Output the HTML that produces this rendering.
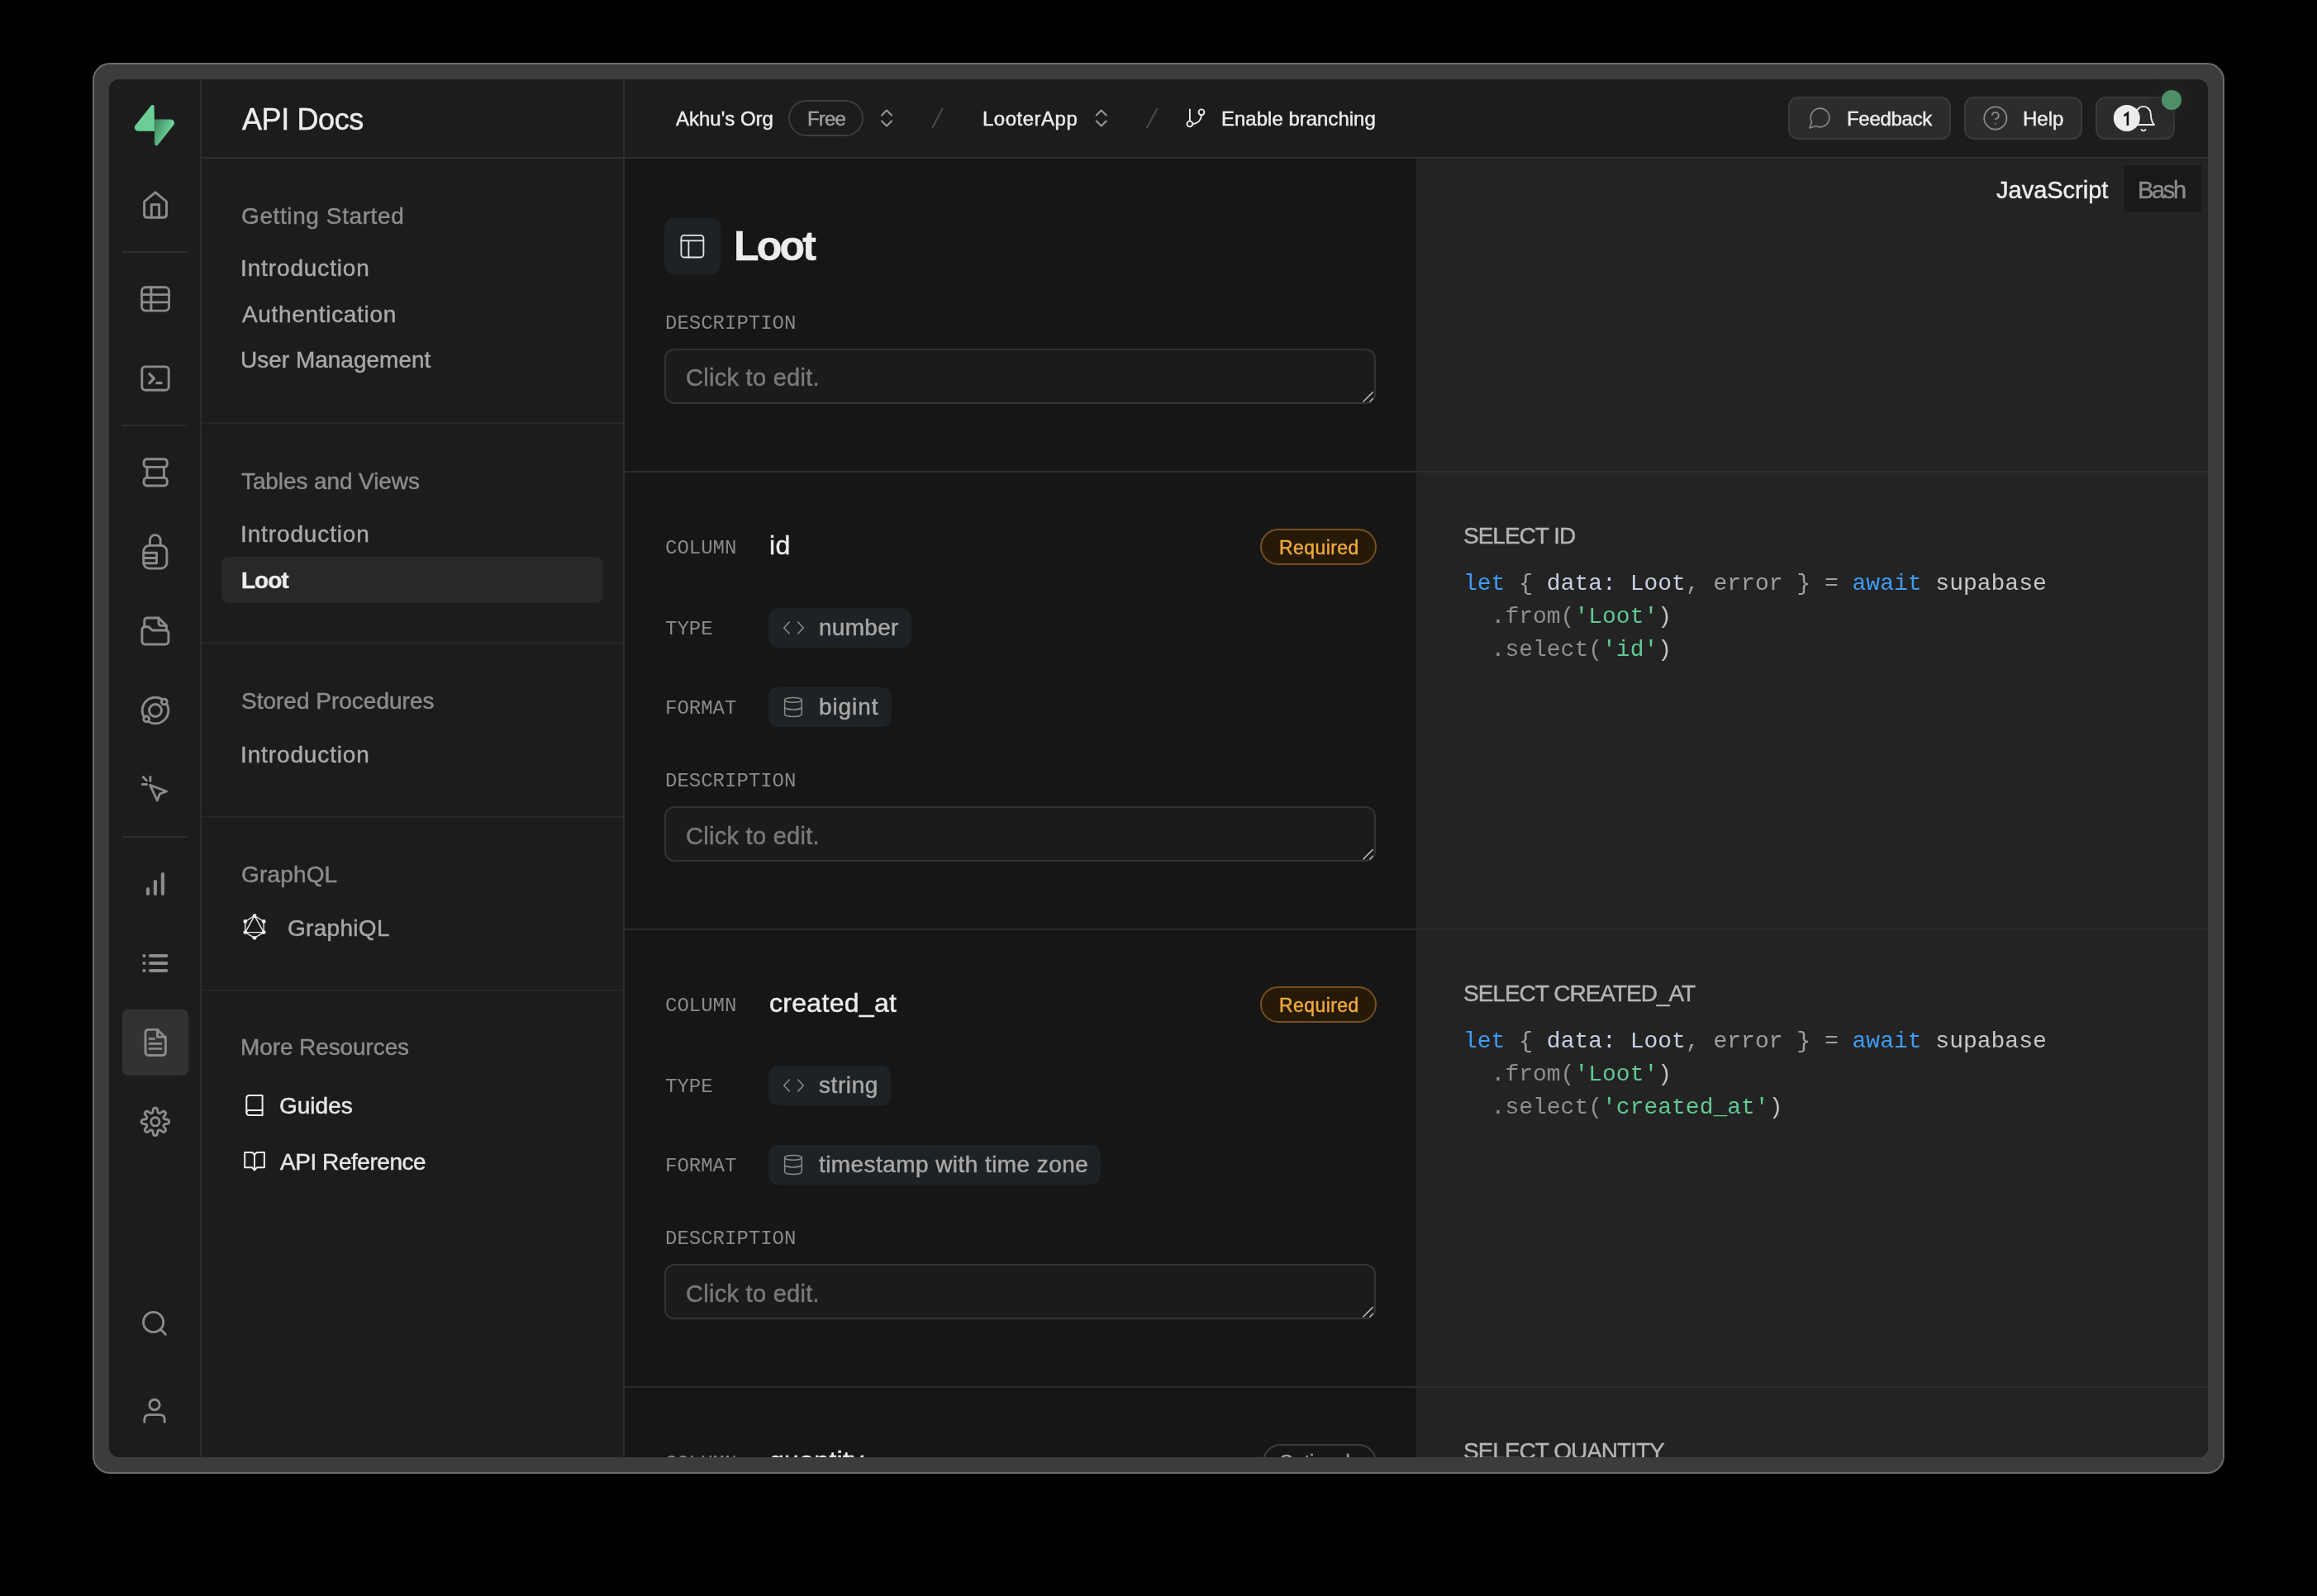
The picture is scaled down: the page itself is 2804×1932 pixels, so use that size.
<!DOCTYPE html>
<html><head><meta charset="utf-8">
<style>
html,body{margin:0;padding:0;width:2804px;height:1932px;background:#000;overflow:hidden}
*{box-sizing:border-box}
.frame{position:absolute;left:112px;top:76px;width:2580px;height:1708px;border-radius:21px;background:#3c3c3c;border:2px solid #6b6b6b}
.app{position:absolute;left:132px;top:96px;width:2540px;height:1668px;border-radius:12px;overflow:hidden;background:#1c1c1c}
.w{position:absolute;left:-132px;top:-96px;width:2804px;height:1932px;will-change:transform}
.r{position:absolute}
.t{position:absolute;white-space:nowrap;line-height:1;font-family:"Liberation Sans",sans-serif;-webkit-text-stroke:0.45px currentColor}
.m{position:absolute;white-space:pre;line-height:1;font-family:"Liberation Mono",monospace}
.hl{position:absolute;height:2px;background:#2c2c2c}
.vl{position:absolute;width:2px;background:#2c2c2c}
.sh{font-size:28px;color:#8c8c8c}
.si{font-size:28px;color:#a9a9a9}
.lbl{font-size:24px;color:#8a8a8a}
.pill{position:absolute;height:48px;border-radius:12px;background:#1f2224}
.ta{position:absolute;left:804px;width:861px;height:67px;border-radius:12px;background:#1b1b1b;border:2px solid #333}
.cte{font-size:29px;color:#7a7a7a}
.code{font-size:28px;color:#a0a0a0}
</style></head><body>
<div class="frame"></div>
<div class="app"><div class="w">
<!-- panels -->
<div class="r" style="left:756px;top:192px;width:958px;height:1572px;background:#161616"></div>
<div class="r" style="left:1714px;top:192px;width:958px;height:1572px;background:#232323"></div>
<!-- borders -->
<div class="vl" style="left:242px;top:96px;height:1668px"></div>
<div class="vl" style="left:754px;top:96px;height:1668px"></div>
<div class="hl" style="left:244px;top:190px;width:2428px;background:#2f2f2f"></div>
<!-- icon sidebar dividers -->
<div class="hl" style="left:148px;top:304px;width:78px"></div>
<div class="hl" style="left:148px;top:514px;width:78px"></div>
<div class="hl" style="left:148px;top:1012px;width:78px"></div>
<!-- sidebar dividers -->
<div class="hl" style="left:244px;top:511px;width:510px;background:#262626"></div>
<div class="hl" style="left:244px;top:777px;width:510px;background:#262626"></div>
<div class="hl" style="left:244px;top:988px;width:510px;background:#262626"></div>
<div class="hl" style="left:244px;top:1198px;width:510px;background:#262626"></div>
<!-- content dividers -->
<div class="hl" style="left:756px;top:570px;width:1916px"></div>
<div class="hl" style="left:756px;top:1124px;width:1916px"></div>
<div class="hl" style="left:756px;top:1678px;width:1916px"></div>

<div class="r" style="left:148px;top:1222px;width:80px;height:80px;border-radius:7px;background:#323232"></div>
<!-- SIDEBAR TEXT -->
<div class="t" style="left:293px;top:127px;font-size:36px;color:#ededed;letter-spacing:-0.4px">API Docs</div>
<div class="t sh" style="left:292px;top:248px;letter-spacing:0.6px">Getting Started</div>
<div class="t si" style="left:291px;top:311px;letter-spacing:0.87px">Introduction</div>
<div class="t si" style="left:293px;top:367px;letter-spacing:0.68px">Authentication</div>
<div class="t si" style="left:291px;top:422px">User Management</div>
<div class="t sh" style="left:292px;top:569px;letter-spacing:-0.1px">Tables and Views</div>
<div class="t si" style="left:291px;top:633px;letter-spacing:0.87px">Introduction</div>
<div class="r" style="left:268px;top:674px;width:462px;height:56px;border-radius:9px;background:#282828"></div>
<div class="t" style="left:292px;top:689px;font-size:28px;font-weight:700;color:#ededed;letter-spacing:-1px">Loot</div>
<div class="t sh" style="left:292px;top:835px">Stored Procedures</div>
<div class="t si" style="left:291px;top:900px;letter-spacing:0.87px">Introduction</div>
<div class="t sh" style="left:292px;top:1045px;letter-spacing:0.17px">GraphQL</div>
<div class="t si" style="left:348px;top:1110px;letter-spacing:0.3px">GraphiQL</div>
<div class="t sh" style="left:291px;top:1254px;letter-spacing:-0.1px">More Resources</div>
<div class="t si" style="left:338px;top:1325px;color:#e6e6e6">Guides</div>
<div class="t si" style="left:339px;top:1393px;color:#e6e6e6;letter-spacing:-0.45px">API Reference</div>
<!--SIDEBAR_END-->
<!-- HEADER -->
<div class="t" style="left:818px;top:132px;font-size:24px;color:#ececec">Akhu's Org</div>
<div class="r" style="left:954px;top:121px;width:91px;height:44px;border-radius:22px;border:2px solid #3d3d3d"></div>
<div class="t" style="left:977px;top:132px;font-size:24px;color:#a0a0a0;letter-spacing:-0.8px">Free</div>
<div class="t" style="left:1189px;top:132px;font-size:24px;color:#ececec;letter-spacing:0.5px">LooterApp</div>
<div class="t" style="left:1478px;top:132px;font-size:24px;color:#ececec">Enable branching</div>
<div class="r" style="left:2164px;top:117px;width:197px;height:52px;border-radius:12px;background:#2c2c2c;border:2px solid #3a3a3a"></div>
<div class="t" style="left:2235px;top:132px;font-size:24px;color:#ececec;letter-spacing:-0.3px">Feedback</div>
<div class="r" style="left:2377px;top:117px;width:143px;height:52px;border-radius:12px;background:#2c2c2c;border:2px solid #3a3a3a"></div>
<div class="t" style="left:2448px;top:132px;font-size:24px;color:#ececec">Help</div>
<div class="r" style="left:2536px;top:117px;width:96px;height:52px;border-radius:12px;background:#2c2c2c;border:2px solid #3a3a3a"></div>
<div class="r" style="left:2596px;top:89px;width:64px;height:64px;border-radius:32px;background:radial-gradient(circle,rgba(40,50,44,.55) 0,rgba(30,34,32,.4) 45%,rgba(28,28,28,0) 70%)"></div>
<div class="r" style="left:2616px;top:109px;width:24px;height:24px;border-radius:12px;background:#4e8f68"></div>

<!-- CODE PANEL TABS -->
<div class="t" style="left:2416px;top:216px;font-size:29px;color:#ededed">JavaScript</div>
<div class="r" style="left:2570px;top:200px;width:94px;height:56px;background:#191919"></div>
<div class="t" style="left:2587px;top:216px;font-size:29px;color:#8a8a8a;letter-spacing:-2.3px">Bash</div>

<!-- TITLE -->
<div class="r" style="left:804px;top:264px;width:68px;height:68px;border-radius:12px;background:#1f2224"></div>
<div class="t" style="left:888px;top:273px;font-size:50px;font-weight:700;color:#ededed;letter-spacing:-2.8px">Loot</div>
<div class="m lbl" style="left:805px;top:380px">DESCRIPTION</div>
<div class="ta" style="top:422px"></div>
<div class="t cte" style="left:830px;top:443px;letter-spacing:0.28px">Click to edit.</div>
<!-- section 0 -->
<div class="m lbl" style="left:805px;top:652px">COLUMN</div>
<div class="t" style="left:931px;top:644px;font-size:32px;color:#ededed;letter-spacing:0.3px">id</div>
<div class="r" style="left:1525px;top:640px;width:141px;height:44px;border-radius:22px;background:#261a07;border:2px solid #75501f"></div>
<div class="t" style="left:1548px;top:652px;font-size:23px;color:#f1a93b;letter-spacing:0.43px">Required</div>
<div class="m lbl" style="left:805px;top:750px">TYPE</div>
<div class="pill" style="left:930px;top:736px;width:173px"></div>
<div class="t" style="left:991px;top:746px;font-size:28px;color:#a8a8a8;letter-spacing:0.28px">number</div>
<div class="m lbl" style="left:805px;top:846px">FORMAT</div>
<div class="pill" style="left:930px;top:832px;width:149px"></div>
<div class="t" style="left:991px;top:842px;font-size:28px;color:#a8a8a8;letter-spacing:0.9px">bigint</div>
<div class="m lbl" style="left:805px;top:934px">DESCRIPTION</div>
<div class="ta" style="top:976px"></div>
<div class="t cte" style="left:830px;top:998px;letter-spacing:0.28px">Click to edit.</div>
<div class="t" style="left:1771px;top:635px;font-size:28px;color:#b4b4b4;letter-spacing:-1px">SELECT ID</div>
<div class="m code" style="left:1771px;top:693px"><span style="color:#3f9cf6">let</span> { <span style="color:#c9cfe2">data:</span> <span style="color:#c9cfe2">Loot</span>, error } = <span style="color:#3f9cf6">await</span> <span style="color:#c8c8c8">supabase</span></div>
<div class="m code" style="left:1771px;top:733px;color:#8f8f8f">  .from(<span style="color:#62c993">'Loot'</span><span style="color:#c4c4c4">)</span></div>
<div class="m code" style="left:1771px;top:773px;color:#8f8f8f">  .select(<span style="color:#62c993">'id'</span><span style="color:#c4c4c4">)</span></div>
<!-- section 1 -->
<div class="m lbl" style="left:805px;top:1206px">COLUMN</div>
<div class="t" style="left:931px;top:1198px;font-size:32px;color:#ededed;letter-spacing:0.3px">created_at</div>
<div class="r" style="left:1525px;top:1194px;width:141px;height:44px;border-radius:22px;background:#261a07;border:2px solid #75501f"></div>
<div class="t" style="left:1548px;top:1206px;font-size:23px;color:#f1a93b;letter-spacing:0.43px">Required</div>
<div class="m lbl" style="left:805px;top:1304px">TYPE</div>
<div class="pill" style="left:930px;top:1290px;width:148px"></div>
<div class="t" style="left:991px;top:1300px;font-size:28px;color:#a8a8a8;letter-spacing:0.58px">string</div>
<div class="m lbl" style="left:805px;top:1400px">FORMAT</div>
<div class="pill" style="left:930px;top:1386px;width:402px"></div>
<div class="t" style="left:991px;top:1396px;font-size:28px;color:#a8a8a8;letter-spacing:0.43px">timestamp with time zone</div>
<div class="m lbl" style="left:805px;top:1488px">DESCRIPTION</div>
<div class="ta" style="top:1530px"></div>
<div class="t cte" style="left:830px;top:1552px;letter-spacing:0.28px">Click to edit.</div>
<div class="t" style="left:1771px;top:1189px;font-size:28px;color:#b4b4b4;letter-spacing:-1px">SELECT CREATED_AT</div>
<div class="m code" style="left:1771px;top:1247px"><span style="color:#3f9cf6">let</span> { <span style="color:#c9cfe2">data:</span> <span style="color:#c9cfe2">Loot</span>, error } = <span style="color:#3f9cf6">await</span> <span style="color:#c8c8c8">supabase</span></div>
<div class="m code" style="left:1771px;top:1287px;color:#8f8f8f">  .from(<span style="color:#62c993">'Loot'</span><span style="color:#c4c4c4">)</span></div>
<div class="m code" style="left:1771px;top:1327px;color:#8f8f8f">  .select(<span style="color:#62c993">'created_at'</span><span style="color:#c4c4c4">)</span></div>
<!-- section 2 -->
<div class="m lbl" style="left:805px;top:1760px">COLUMN</div>
<div class="t" style="left:931px;top:1752px;font-size:32px;color:#ededed;letter-spacing:0.3px">quantity</div>
<div class="r" style="left:1528px;top:1748px;width:138px;height:44px;border-radius:22px;border:2px solid #3d3d3d"></div>
<div class="t" style="left:1548px;top:1759px;font-size:23px;color:#a0a0a0">Optional</div>
<div class="m lbl" style="left:805px;top:1858px">TYPE</div>
<div class="pill" style="left:930px;top:1844px;width:173px"></div>
<div class="t" style="left:991px;top:1854px;font-size:28px;color:#a8a8a8;letter-spacing:0.28px">number</div>
<div class="m lbl" style="left:805px;top:1954px">FORMAT</div>
<div class="pill" style="left:930px;top:1940px;width:149px"></div>
<div class="t" style="left:991px;top:1950px;font-size:28px;color:#a8a8a8;letter-spacing:0.9px">bigint</div>
<div class="m lbl" style="left:805px;top:2042px">DESCRIPTION</div>
<div class="ta" style="top:2084px"></div>
<div class="t cte" style="left:830px;top:2106px;letter-spacing:0.28px">Click to edit.</div>
<div class="t" style="left:1771px;top:1743px;font-size:28px;color:#b4b4b4;letter-spacing:-1px">SELECT QUANTITY</div>
<div class="m code" style="left:1771px;top:1801px"><span style="color:#3f9cf6">let</span> { <span style="color:#c9cfe2">data:</span> <span style="color:#c9cfe2">Loot</span>, error } = <span style="color:#3f9cf6">await</span> <span style="color:#c8c8c8">supabase</span></div>
<div class="m code" style="left:1771px;top:1841px;color:#8f8f8f">  .from(<span style="color:#62c993">'Loot'</span><span style="color:#c4c4c4">)</span></div>
<div class="m code" style="left:1771px;top:1881px;color:#8f8f8f">  .select(<span style="color:#62c993">'quantity'</span><span style="color:#c4c4c4">)</span></div>

<!--CONTENT_END-->
<!--ICONS-->
<svg class="r" style="left:0;top:0" width="2804" height="1932" viewBox="0 0 2804 1932" fill="none" stroke-linecap="round" stroke-linejoin="round">
<defs><linearGradient id="lg0" x1="53.97" y1="54.97" x2="94.16" y2="71.83" gradientUnits="userSpaceOnUse"><stop stop-color="#3f8a5f"/><stop offset="1" stop-color="#6ccd96"/></linearGradient></defs>
<g transform="translate(162.8,126.8) scale(0.4425)" stroke="none"><path d="M63.7076 110.284C60.8481 113.885 55.0502 111.912 54.9813 107.314L53.9738 40.0627L99.1935 40.0627C107.384 40.0627 111.952 49.5228 106.859 55.9374L63.7076 110.284Z" fill="url(#lg0)"/><path d="M45.317 2.07103C48.1765 -1.53037 53.9745 0.442937 54.0434 5.041L54.4849 72.2922H9.83113C1.64038 72.2922 -2.92775 62.8321 2.1655 56.4175L45.317 2.07103Z" fill="#6ccd96"/></g>
<g stroke="#8b8b8b" stroke-width="2.9">
<path d="M174.6 244 L188 232.8 L201.5 244 V259.5 Q201.5 263.3 197.7 263.3 H178.4 Q174.6 263.3 174.6 259.5 Z"/>
<path d="M183.3 263.3 V247.6 H192.6 V263.3"/>
<rect x="171.6" y="347.7" width="32.9" height="28.4" rx="4.5"/>
<path d="M171.6 356.6 H204.5 M171.6 365.9 H204.5 M182.9 347.7 V376.1"/>
<rect x="171.8" y="443.9" width="32.4" height="28.3" rx="4"/>
<path d="M180.9 452.6 L186.4 458.2 L180.9 463.8 M189.8 463.6 H195.2" stroke-width="3.3"/>
<rect x="174.1" y="555.8" width="28.2" height="9.6" rx="3.5"/>
<rect x="174.1" y="578.4" width="28.2" height="9.6" rx="3.5"/>
<path d="M178 565.4 V578.4 M198.4 565.4 V578.4"/>
<path d="M181.4 660 V654 A6.4 6.4 0 0 1 194.2 654 V660"/>
<rect x="173.7" y="660.4" width="28.2" height="27.7" rx="7"/>
<path d="M173.7 669.3 H189.5 V681.7 H173.7 M173.7 675.5 H189.5"/>
<path d="M174.7 758 V752 Q174.7 748 178.7 748 H192 L201.4 757.4 V762.8"/>
<path d="M192 748 V754 Q192 757.4 195.4 757.4 H201.4"/>
<path d="M171.9 776 V762.8 Q171.9 758.8 175.9 758.8 H180 L184.2 763 H199.9 Q203.9 763 203.9 767 V776 Q203.9 780 199.9 780 H175.9 Q171.9 780 171.9 776 Z"/>
<circle cx="188" cy="860" r="15.8"/>
<circle cx="188" cy="860" r="7.5"/>
<circle cx="198.8" cy="849.5" r="3.4" fill="#1c1c1c"/>
<circle cx="177.2" cy="870.4" r="3.4" fill="#1c1c1c"/>
<path d="M181.6 950.3 L201.6 958 L193.2 961.2 L190.2 969 Z"/>
<path d="M181.9 940.5 V945.5 M173.2 940.6 L177.3 944.8 M172.3 949.5 H177.5"/>
<path d="M179 1076 V1082 M187.9 1067 V1082 M196.9 1058.2 V1082" stroke-width="4.2"/>
<path d="M181.9 1157 H201.4 M181.9 1166 H201.4 M181.9 1175 H201.4" stroke-width="4"/>
<circle cx="174.4" cy="1157" r="2.1" fill="#8b8b8b" stroke="none"/><circle cx="174.4" cy="1166" r="2.1" fill="#8b8b8b" stroke="none"/><circle cx="174.4" cy="1175" r="2.1" fill="#8b8b8b" stroke="none"/>
<path d="M190.5 1246.4 H180 Q176 1246.4 176 1250.4 V1273.5 Q176 1277.5 180 1277.5 H196.4 Q200.4 1277.5 200.4 1273.5 V1256.3 Z"/>
<path d="M190.5 1246.4 V1255.4 H200.4"/>
<path d="M180.9 1257.4 H186.6 M180.9 1263.4 H195 M180.9 1269.5 H195" stroke-width="2.7"/>
<path d="M187.90 1341.10 L188.34 1341.12 L188.77 1341.19 L189.20 1341.34 L189.60 1341.59 L189.98 1342.02 L190.29 1342.70 L190.52 1343.64 L190.69 1344.70 L190.82 1345.64 L190.98 1346.32 L191.17 1346.77 L191.39 1347.07 L191.63 1347.27 L191.88 1347.42 L192.15 1347.54 L192.42 1347.64 L192.71 1347.72 L193.02 1347.74 L193.39 1347.69 L193.84 1347.51 L194.44 1347.13 L195.20 1346.56 L196.06 1345.93 L196.89 1345.43 L197.59 1345.17 L198.16 1345.13 L198.62 1345.24 L199.03 1345.44 L199.38 1345.70 L199.71 1345.99 L200.00 1346.32 L200.26 1346.67 L200.46 1347.08 L200.57 1347.54 L200.53 1348.11 L200.27 1348.81 L199.77 1349.64 L199.14 1350.50 L198.57 1351.26 L198.19 1351.86 L198.01 1352.31 L197.96 1352.68 L197.98 1352.99 L198.06 1353.28 L198.16 1353.55 L198.28 1353.82 L198.43 1354.07 L198.63 1354.31 L198.93 1354.53 L199.38 1354.72 L200.06 1354.88 L201.00 1355.01 L202.06 1355.18 L203.00 1355.41 L203.68 1355.72 L204.11 1356.10 L204.36 1356.50 L204.51 1356.93 L204.58 1357.36 L204.60 1357.80 L204.58 1358.24 L204.51 1358.67 L204.36 1359.10 L204.11 1359.50 L203.68 1359.88 L203.00 1360.19 L202.06 1360.42 L201.00 1360.59 L200.06 1360.72 L199.38 1360.88 L198.93 1361.07 L198.63 1361.29 L198.43 1361.53 L198.28 1361.78 L198.16 1362.05 L198.06 1362.32 L197.98 1362.61 L197.96 1362.92 L198.01 1363.29 L198.19 1363.74 L198.57 1364.34 L199.14 1365.10 L199.77 1365.96 L200.27 1366.79 L200.53 1367.49 L200.57 1368.06 L200.46 1368.52 L200.26 1368.93 L200.00 1369.28 L199.71 1369.61 L199.38 1369.90 L199.03 1370.16 L198.62 1370.36 L198.16 1370.47 L197.59 1370.43 L196.89 1370.17 L196.06 1369.67 L195.20 1369.04 L194.44 1368.47 L193.84 1368.09 L193.39 1367.91 L193.02 1367.86 L192.71 1367.88 L192.42 1367.96 L192.15 1368.06 L191.88 1368.18 L191.63 1368.33 L191.39 1368.53 L191.17 1368.83 L190.98 1369.28 L190.82 1369.96 L190.69 1370.90 L190.52 1371.96 L190.29 1372.90 L189.98 1373.58 L189.60 1374.01 L189.20 1374.26 L188.77 1374.41 L188.34 1374.48 L187.90 1374.50 L187.46 1374.48 L187.03 1374.41 L186.60 1374.26 L186.20 1374.01 L185.82 1373.58 L185.51 1372.90 L185.28 1371.96 L185.11 1370.90 L184.98 1369.96 L184.82 1369.28 L184.63 1368.83 L184.41 1368.53 L184.17 1368.33 L183.92 1368.18 L183.65 1368.06 L183.38 1367.96 L183.09 1367.88 L182.78 1367.86 L182.41 1367.91 L181.96 1368.09 L181.36 1368.47 L180.60 1369.04 L179.74 1369.67 L178.91 1370.17 L178.21 1370.43 L177.64 1370.47 L177.18 1370.36 L176.77 1370.16 L176.42 1369.90 L176.09 1369.61 L175.80 1369.28 L175.54 1368.93 L175.34 1368.52 L175.23 1368.06 L175.27 1367.49 L175.53 1366.79 L176.03 1365.96 L176.66 1365.10 L177.23 1364.34 L177.61 1363.74 L177.79 1363.29 L177.84 1362.92 L177.82 1362.61 L177.74 1362.32 L177.64 1362.05 L177.52 1361.78 L177.37 1361.53 L177.17 1361.29 L176.87 1361.07 L176.42 1360.88 L175.74 1360.72 L174.80 1360.59 L173.74 1360.42 L172.80 1360.19 L172.12 1359.88 L171.69 1359.50 L171.44 1359.10 L171.29 1358.67 L171.22 1358.24 L171.20 1357.80 L171.22 1357.36 L171.29 1356.93 L171.44 1356.50 L171.69 1356.10 L172.12 1355.72 L172.80 1355.41 L173.74 1355.18 L174.80 1355.01 L175.74 1354.88 L176.42 1354.72 L176.87 1354.53 L177.17 1354.31 L177.37 1354.07 L177.52 1353.82 L177.64 1353.55 L177.74 1353.28 L177.82 1352.99 L177.84 1352.68 L177.79 1352.31 L177.61 1351.86 L177.23 1351.26 L176.66 1350.50 L176.03 1349.64 L175.53 1348.81 L175.27 1348.11 L175.23 1347.54 L175.34 1347.08 L175.54 1346.67 L175.80 1346.32 L176.09 1345.99 L176.42 1345.70 L176.77 1345.44 L177.18 1345.24 L177.64 1345.13 L178.21 1345.17 L178.91 1345.43 L179.74 1345.93 L180.60 1346.56 L181.36 1347.13 L181.96 1347.51 L182.41 1347.69 L182.78 1347.74 L183.09 1347.72 L183.38 1347.64 L183.65 1347.54 L183.92 1347.42 L184.17 1347.27 L184.41 1347.07 L184.63 1346.77 L184.82 1346.32 L184.98 1345.64 L185.11 1344.70 L185.28 1343.64 L185.51 1342.70 L185.82 1342.02 L186.20 1341.59 L186.60 1341.34 L187.03 1341.19 L187.46 1341.12 L187.90 1341.10 Z"/>
<circle cx="187.9" cy="1357.8" r="5.1"/>
<circle cx="185.6" cy="1600.5" r="12.1"/>
<path d="M194.5 1609.4 L200.4 1615.3"/>
<circle cx="187" cy="1700.5" r="6.2"/>
<path d="M174.8 1721.6 V1718.4 Q174.8 1712.6 180.6 1712.6 H193.4 Q199.2 1712.6 199.2 1718.4 V1721.6"/>
</g>
<g stroke="#9a9a9a" stroke-width="2">
<path d="M1067 139.5 L1073 133.5 L1079 139.5 M1067 146.5 L1073 152.5 L1079 146.5"/>
<path d="M1326.8 139.5 L1332.8 133.5 L1338.8 139.5 M1326.8 146.5 L1332.8 152.5 L1338.8 146.5"/>
</g>
<path d="M1140.5 131.5 L1128.5 154.5 M1400.5 131.5 L1388 154.5" stroke="#4a4a4a" stroke-width="2"/>
<g stroke="#ebebeb" stroke-width="1.9"><path d="M1439.9 131.8 V146.4" stroke-linecap="butt"/><circle cx="1439.9" cy="150" r="3.4"/><circle cx="1454" cy="135.8" r="3.4"/><path d="M1454 139.3 C1453.6 145.5 1449.5 149.6 1443.4 150"/></g>
<g transform="translate(2187.5,127.4) scale(1.256)" stroke="#8a8a8a" stroke-width="1.3"><path d="M7.9 20A9 9 0 1 0 4 16.1L2 22Z"/></g>
<g transform="translate(2398.5,126.6) scale(1.36)" stroke="#8a8a8a" stroke-width="1.3"><circle cx="12" cy="12" r="10"/><path d="M9.09 9a3 3 0 0 1 5.83 1c0 2-3 3-3 3"/><path d="M12 17h.01"/></g>
<g transform="translate(2576.3,126) scale(1.47)" stroke="#efefef" stroke-width="1.25"><path d="M6 8a6 6 0 0 1 12 0c0 7 3 9 3 9H3s3-2 3-9"/><path d="M10.3 21a1.94 1.94 0 0 0 3.4 0"/></g>
<g stroke="#e6e6e6" stroke-width="1.8"><rect x="824.4" y="284.9" width="27" height="26.6" rx="3.5"/><path d="M833.4 291.4 V311.5 M824.4 291.4 H851.4"/></g>
<g stroke="#8a8a8a" stroke-width="1.6"><path d="M955.3 753 L948.7 760 L955.3 767 M965.7 753 L972.3 760 L965.7 767"/></g>
<g stroke="#8a8a8a" stroke-width="1.5"><ellipse cx="959.9" cy="847.3" rx="10.3" ry="2.9"/><path d="M949.6 847.3 V864.6 A10.3 2.9 0 0 0 970.2 864.6 V847.3 M949.6 856.0 A10.3 2.9 0 0 0 970.2 856.0"/></g>
<g stroke="#8a8a8a" stroke-width="1.6"><path d="M955.3 1307 L948.7 1314 L955.3 1321 M965.7 1307 L972.3 1314 L965.7 1321"/></g>
<g stroke="#8a8a8a" stroke-width="1.5"><ellipse cx="959.9" cy="1401.3" rx="10.3" ry="2.9"/><path d="M949.6 1401.3 V1418.6 A10.3 2.9 0 0 0 970.2 1418.6 V1401.3 M949.6 1410.0 A10.3 2.9 0 0 0 970.2 1410.0"/></g>
<g stroke="#8a8a8a" stroke-width="1.6"><path d="M955.3 1861 L948.7 1868 L955.3 1875 M965.7 1861 L972.3 1868 L965.7 1875"/></g>
<g stroke="#8a8a8a" stroke-width="1.5"><ellipse cx="959.9" cy="1955.3" rx="10.3" ry="2.9"/><path d="M949.6 1955.3 V1972.6 A10.3 2.9 0 0 0 970.2 1972.6 V1955.3 M949.6 1964.0 A10.3 2.9 0 0 0 970.2 1964.0"/></g>
<path d="M1650 486.0 L1661.2 474.8 M1658 486.0 L1661.2 482.7" stroke="#000" stroke-width="3" stroke-linecap="butt" opacity=".6"/>
<path d="M1650 486.0 L1661.2 474.8 M1658 486.0 L1661.2 482.7" stroke="#b5b5b5" stroke-width="1.7"/>
<path d="M1650 1039.8 L1661.2 1028.6 M1658 1039.8 L1661.2 1036.5" stroke="#000" stroke-width="3" stroke-linecap="butt" opacity=".6"/>
<path d="M1650 1039.8 L1661.2 1028.6 M1658 1039.8 L1661.2 1036.5" stroke="#b5b5b5" stroke-width="1.7"/>
<path d="M1650 1593.8 L1661.2 1582.6 M1658 1593.8 L1661.2 1590.5" stroke="#000" stroke-width="3" stroke-linecap="butt" opacity=".6"/>
<path d="M1650 1593.8 L1661.2 1582.6 M1658 1593.8 L1661.2 1590.5" stroke="#b5b5b5" stroke-width="1.7"/>
<g stroke="#ececec" stroke-width="1.4"><path d="M308 1108.7 L319.2 1115.5 L319.2 1128.6 L308 1135.3 L296.8 1128.6 L296.8 1115.5 Z"/><path d="M308 1108.7 L296.8 1128.6 H319.2 Z"/></g>
<circle cx="308" cy="1108.7" r="2.4" fill="#ececec"/>
<circle cx="319.2" cy="1115.5" r="2.4" fill="#ececec"/>
<circle cx="319.2" cy="1128.6" r="2.4" fill="#ececec"/>
<circle cx="308" cy="1135.3" r="2.4" fill="#ececec"/>
<circle cx="296.8" cy="1128.6" r="2.4" fill="#ececec"/>
<circle cx="296.8" cy="1115.5" r="2.4" fill="#ececec"/>
<g stroke="#ececec" stroke-width="2"><path d="M317.6 1326 V1349.9 H301.8 Q298.3 1349.9 298.3 1346.4 V1329.6 Q298.3 1326 301.8 1326 Z"/><path d="M298.3 1346.4 Q298.3 1343.9 300.9 1343.9 H317.6"/><path d="M296.2 1395 H303 Q308 1395 308 1399.5 Q308 1395 313 1395 H319.9 V1413.3 H311 L308 1416.5 L305 1413.3 H296.2 Z"/><path d="M308 1399.5 V1415"/></g>
<circle cx="2573.8" cy="142.9" r="16" fill="#ececec" stroke="none"/>
<path d="M2574.9 151.9 V137 L2570.4 140.2" stroke="#111" stroke-width="2.6" stroke-linecap="butt" stroke-linejoin="miter"/>
</svg>
<!--ICONS_END-->

</div></div>
</body></html>
